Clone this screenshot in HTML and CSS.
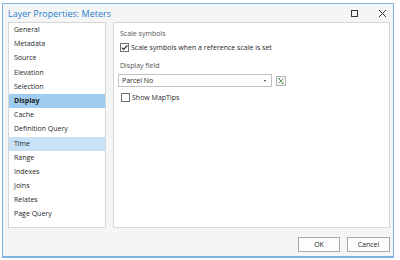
FILE: index.html
```html
<!DOCTYPE html>
<html lang="en">
<head>
  <meta charset="UTF-8">
  <title>Layer Properties: Meters</title>
  <link rel="stylesheet" href="styles.css">
</head>
<body>
  <div class="dialog">
    <div class="titlebar">
      <span class="title">Layer Properties: Meters</span>
      <span class="window-buttons">
        <svg class="win-btn" width="9" height="9" viewBox="0 0 9 9"><rect x="1.5" y="1.5" width="6" height="6" fill="none" stroke="#333" stroke-width="1"/></svg>
        <svg class="win-btn" width="9" height="9" viewBox="0 0 9 9"><path d="M1 1 L8 8 M8 1 L1 8" stroke="#333" stroke-width="1"/></svg>
      </span>
    </div>

    <div class="dialog-body">
      <ul class="page-list">
        <li>General</li>
        <li>Metadata</li>
        <li>Source</li>
        <li>Elevation</li>
        <li>Selection</li>
        <li class="selected">Display</li>
        <li>Cache</li>
        <li>Definition Query</li>
        <li class="hover">Time</li>
        <li>Range</li>
        <li>Indexes</li>
        <li>Joins</li>
        <li>Relates</li>
        <li>Page Query</li>
      </ul>

      <div class="page">
        <div class="group-label">Scale symbols</div>
        <label class="check">
          <span class="box"><svg width="9" height="9" viewBox="0 0 9 9"><path d="M1.8 4.6 L3.6 6.4 L7.4 2.4" fill="none" stroke="#222" stroke-width="1.1"/></svg></span>
          Scale symbols when a reference scale is set
        </label>

        <div class="group-label field-label">Display field</div>
        <div class="field-row">
          <div class="select">
            <span>Parcel No</span>
            <span class="arrow"></span>
          </div>
          <span class="expr-btn">
            <svg width="6" height="6" viewBox="0 0 6 6"><path d="M0.8 0.8 L5.2 5.2 M5.2 0.8 L0.8 5.2" fill="none" stroke="#4f9f4f" stroke-width="0.9"/><path d="M0.3 0.5 H2.2 M3.8 5.5 H5.7" fill="none" stroke="#4f9f4f" stroke-width="0.8"/></svg>
          </span>
        </div>

        <label class="check maptips">
          <span class="box"></span>
          Show MapTips
        </label>
      </div>
    </div>

    <div class="dialog-footer">
      <button class="btn">OK</button>
      <button class="btn">Cancel</button>
    </div>
  </div>
</body>
</html>
```

FILE: styles.css
```css
body {
  margin: 0;
  width: 400px;
  height: 260px;
  overflow: hidden;
  background-color: #ffffff;
  font-family: "Open Sans", "Noto Sans", sans-serif;
  font-size: 7px;
  color: #1f1f1f;
}

.dialog {
  box-sizing: border-box;
  margin: 3px 0 0 2px;
  width: 392px;
  height: 255px;
  border: 1px solid #7fb0de;
  border-bottom-width: 2px;
  background-color: #f4f5f5;
  display: flex;
  flex-direction: column;
}

/* title bar */
.titlebar {
  height: 18px;
  display: flex;
  align-items: center;
  padding-left: 5px;
}

.title {
  flex: 1;
  font-size: 9px;
  color: #2b7fd0;
}

.window-buttons {
  display: flex;
  align-items: center;
  gap: 19px;
  padding-right: 6px;
}

.win-btn {
  display: block;
}

/* body */
.dialog-body {
  height: 206px;
  display: flex;
  gap: 7px;
  padding: 0 3px 0 5px;
}

.page-list {
  list-style: none;
  margin: 0;
  padding: 0;
  width: 98px;
  box-sizing: border-box;
  border: 1px solid #d6d6d6;
  background-color: #ffffff;
}

.page-list li {
  height: 14.2px;
  line-height: 14px;
  padding-left: 5px;
}

.page-list li.selected {
  background-color: #9fcdf1;
  font-weight: bold;
}

.page-list li.hover {
  background-color: #c9e1f5;
}

.page {
  flex: 1;
  border: 1px solid #d6d6d6;
  background-color: #ffffff;
  padding: 6px 6px;
}

.group-label {
  height: 10px;
  line-height: 10px;
  color: #555555;
}

.field-label {
  margin-top: 9px;
}

.check {
  display: flex;
  align-items: center;
  gap: 2px;
  height: 10px;
  margin-top: 3px;
}

.check .box {
  box-sizing: border-box;
  width: 9px;
  height: 9px;
  border: 1px solid #6f6f6f;
  background-color: #ffffff;
  position: relative;
}

.check .box svg {
  position: absolute;
  left: -1px;
  top: -1px;
}

.check.maptips {
  margin-top: 5px;
  margin-left: 1px;
}

.field-row {
  display: flex;
  align-items: center;
  gap: 4px;
  margin-top: 3px;
  margin-left: -2px;
}

.select {
  box-sizing: border-box;
  width: 154px;
  height: 13px;
  border: 1px solid #c2c2c2;
  background-color: #ffffff;
  display: flex;
  align-items: center;
  justify-content: space-between;
  padding: 0 5px 0 3px;
}

.select .arrow {
  width: 0;
  height: 0;
  border-left: 1.5px solid transparent;
  border-right: 1.5px solid transparent;
  border-top: 2px solid #333333;
}

.expr-btn {
  box-sizing: border-box;
  width: 10px;
  height: 10px;
  border: 1px solid #b4b4b4;
  background-color: #f4f4f4;
  display: flex;
  align-items: center;
  justify-content: center;
}

/* footer */
.dialog-footer {
  flex: 1;
  display: flex;
  justify-content: flex-end;
  align-items: flex-start;
  gap: 7px;
  padding: 9px 3px 0 0;
}

.btn {
  box-sizing: border-box;
  width: 42px;
  height: 15px;
  padding: 0;
  border: 1px solid #a9a9a9;
  background-color: #fdfdfd;
  font-family: "Open Sans", "Noto Sans", sans-serif;
  font-size: 7px;
  color: #1f1f1f;
}

.btn + .btn {
  width: 43px;
}
```
